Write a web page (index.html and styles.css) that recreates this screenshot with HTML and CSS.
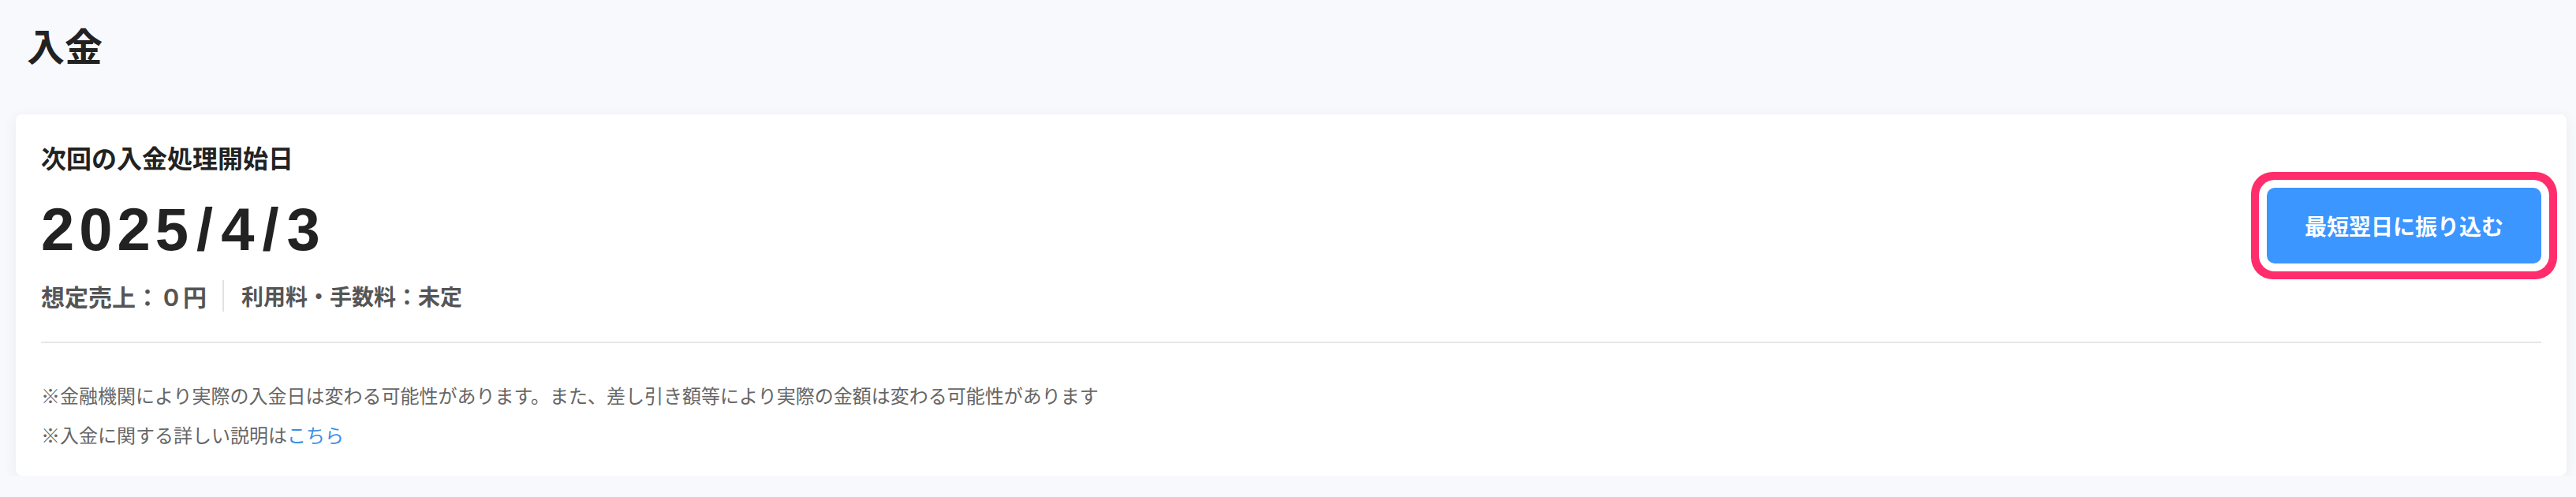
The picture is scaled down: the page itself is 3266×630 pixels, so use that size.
FILE: index.html
```html
<!DOCTYPE html>
<html lang="ja">
    <head>
        <meta charset="UTF-8" />
        <meta name="viewport" content="width=device-width, initial-scale=1.0" />
        <title>入金</title>
        <link rel="stylesheet" href="styles.css">
    </head>

    <body>
        <main class="page">
            <h1 class="page-title">入金</h1>

            <section class="card">
                <div class="card-head">
                    <div class="summary">
                        <p class="summary-label">次回の入金処理開始日</p>
                        <p class="summary-date">2025<span class="slash">/</span>4<span class="slash">/</span>3</p>
                        <p class="summary-meta">
                            <span class="meta-sales">想定売上：０円</span>
                            <span class="meta-fee">利用料・手数料：未定</span>
                        </p>
                    </div>
                    <button class="transfer-btn" type="button">最短翌日に振り込む</button>
                </div>

                <div class="card-notes">
                    <p>※金融機関により実際の入金日は変わる可能性があります。また、差し引き額等により実際の金額は変わる可能性があります</p>
                    <p>※入金に関する詳しい説明は<a href="#">こちら</a></p>
                </div>
            </section>
        </main>
    </body>
</html>
```

FILE: styles.css
```css
* {
    padding: 0;
    margin: 0;
    box-sizing: border-box;
}

body {
    background-color: #f8f9fc;
    color: #222;
    font-family: "Noto Sans CJK JP", "Noto Sans", sans-serif;
}

.page {
    padding: 20px 12px 0 20px;
}

.page-title {
    padding-left: 14px;
    font-size: 48px;
    line-height: 72px;
    font-weight: 700;
}

/* 入金カード */
.card {
    margin-top: 53px;
    padding: 32px 32px 34px;
    background-color: #fff;
    border-radius: 8px;
    box-shadow: 0 4px 18px rgba(40, 50, 90, 0.07);
}

.card-head {
    display: flex;
    align-items: center;
    justify-content: space-between;
    padding-bottom: 38px;
    border-bottom: 2px solid #e6e6e6;
}

.summary-label {
    font-size: 32px;
    line-height: 44px;
    font-weight: 700;
}

.summary-date {
    margin-top: 24px;
    font-family: "Liberation Sans", Arial, sans-serif;
    font-size: 76px;
    line-height: 91px;
    font-weight: 700;
    letter-spacing: 6px;
}

.summary-date .slash {
    margin: 0 4px;
}

.summary-meta {
    display: flex;
    align-items: center;
    margin-top: 19px;
    color: #555;
    line-height: 40px;
    font-weight: 700;
}

.meta-sales {
    padding-right: 20px;
    margin-right: 22px;
    border-right: 2px solid #e2e2e2;
    font-size: 30px;
}

.meta-fee {
    font-size: 28px;
}

.transfer-btn {
    width: 348px;
    height: 96px;
    border: 0;
    border-radius: 10px;
    background-color: #3c96ff;
    color: #fff;
    font-family: "Noto Sans CJK JP", sans-serif;
    font-size: 28px;
    font-weight: 700;
    cursor: pointer;
    box-shadow: 0 0 0 10px #fff, 0 0 0 20px #ff2d6b;
}

.card-notes {
    display: flex;
    flex-direction: column;
    gap: 14px;
    padding-top: 48px;
    color: #666;
    font-size: 24px;
    line-height: 36px;
}

.card-notes a {
    color: #3a8ee6;
    text-decoration: none;
}
```
